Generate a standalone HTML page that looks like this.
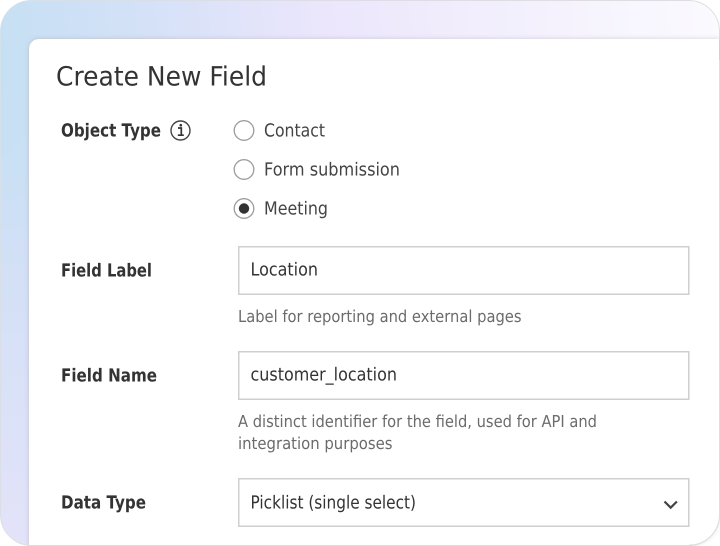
<!DOCTYPE html>
<html><head><meta charset="utf-8">
<style>
html,body{margin:0;padding:0;width:720px;height:546px;overflow:hidden;background:#fff}
svg{display:block}
text{font-family:"DejaVu Sans","Liberation Sans",sans-serif;text-rendering:geometricPrecision}
</style></head>
<body>
<svg width="720" height="546" viewBox="0 0 720 546" xmlns="http://www.w3.org/2000/svg">
<defs>
<linearGradient id="bg" gradientUnits="userSpaceOnUse" x1="0" y1="60" x2="720" y2="0">
<stop offset="0" stop-color="#c6e0f3"/>
<stop offset="0.2" stop-color="#d4e1f7"/>
<stop offset="0.45" stop-color="#ebe6fc"/>
<stop offset="0.75" stop-color="#f4f1fd"/>
<stop offset="1" stop-color="#fbfafe"/>
</linearGradient>
<linearGradient id="bg2" gradientUnits="userSpaceOnUse" x1="0" y1="60" x2="0" y2="546">
<stop offset="0" stop-color="#c8e0f4" stop-opacity="0"/>
<stop offset="0.4" stop-color="#d2e0f6" stop-opacity="1"/>
<stop offset="1" stop-color="#e3e3f9" stop-opacity="1"/>
</linearGradient>
<filter id="sh" x="-5%" y="-5%" width="110%" height="110%">
<feGaussianBlur stdDeviation="2.500"/>
</filter>
</defs>
<rect x="0.500" y="0.500" width="719" height="545" rx="31" fill="url(#bg)" stroke="#dedede"/>
<path d="M1 60V515A30 30 0 0 0 29 545V60Z" fill="url(#bg2)"/>
<path d="M29 546V49A10 10 0 0 1 39 39H719V515A30 30 0 0 1 689 545H29Z" fill="#8a80a8" opacity="0.35" filter="url(#sh)"/>
<path d="M29 546V49A10 10 0 0 1 39 39H719V515A30 30 0 0 1 689 545H29Z" fill="#fff"/>
<path d="M689 545A30 30 0 0 0 719.500 515V60" fill="none" stroke="#dedede"/>
<path d="M29 545.500H689" fill="none" stroke="#dedede"/>

<text x="56" y="85.500" font-size="26.500" fill="#333" textLength="211" lengthAdjust="spacingAndGlyphs">Create New Field</text>

<g font-size="18" font-weight="700" fill="#333">
<text x="61" y="136.500" textLength="100" lengthAdjust="spacingAndGlyphs">Object Type</text>
<text x="61" y="276.500" textLength="91" lengthAdjust="spacingAndGlyphs">Field Label</text>
<text x="61" y="381.500" textLength="96" lengthAdjust="spacingAndGlyphs">Field Name</text>
<text x="61" y="508.500" textLength="85" lengthAdjust="spacingAndGlyphs">Data Type</text>
</g>

<circle cx="180.500" cy="130.500" r="9.500" fill="none" stroke="#444" stroke-width="1.400"/>
<path d="M178 128H181.300V135M177.800 135.200H183.800" fill="none" stroke="#333" stroke-width="1.700"/>
<circle cx="180.800" cy="125.200" r="1.300" fill="#333"/>

<g fill="#fff" stroke="#9c9c9c" stroke-width="1.300">
<circle cx="244" cy="130.500" r="9.800"/>
<circle cx="244" cy="169.500" r="9.800"/>
<circle cx="244" cy="208.500" r="9.800"/>
</g>
<circle cx="244" cy="208.500" r="5.200" fill="#333"/>

<g font-size="18" fill="#444">
<text x="264" y="136.500" textLength="61" lengthAdjust="spacingAndGlyphs">Contact</text>
<text x="264" y="175.500" textLength="136" lengthAdjust="spacingAndGlyphs">Form submission</text>
<text x="264" y="214.500" textLength="64" lengthAdjust="spacingAndGlyphs">Meeting</text>
</g>

<g fill="#fff" stroke="#cfcfcf" stroke-width="1.500">
<rect x="238.750" y="246.750" width="450" height="47.500"/>
<rect x="238.750" y="351.750" width="450" height="47.500"/>
<rect x="238.750" y="478.750" width="450" height="47.500"/>
</g>

<g font-size="18" fill="#333">
<text x="250.500" y="275.500" textLength="67.500" lengthAdjust="spacingAndGlyphs">Location</text>
<text x="250.500" y="380.500" textLength="146.500" lengthAdjust="spacingAndGlyphs">customer_location</text>
<text x="250.500" y="508.500" textLength="165.500" lengthAdjust="spacingAndGlyphs">Picklist (single select)</text>
</g>

<g font-size="16.500" fill="#6b6b6b">
<text x="238" y="322" textLength="283.500" lengthAdjust="spacingAndGlyphs">Label for reporting and external pages</text>
<text x="238" y="427" textLength="359" lengthAdjust="spacingAndGlyphs">A distinct identifier for the field, used for API and</text>
<text x="238" y="449" textLength="154.500" lengthAdjust="spacingAndGlyphs">integration purposes</text>
</g>

<path d="M664.500 501.500L670.700 507.700L676.900 501.500" fill="none" stroke="#444" stroke-width="2.200"/>
</svg>
</body></html>
